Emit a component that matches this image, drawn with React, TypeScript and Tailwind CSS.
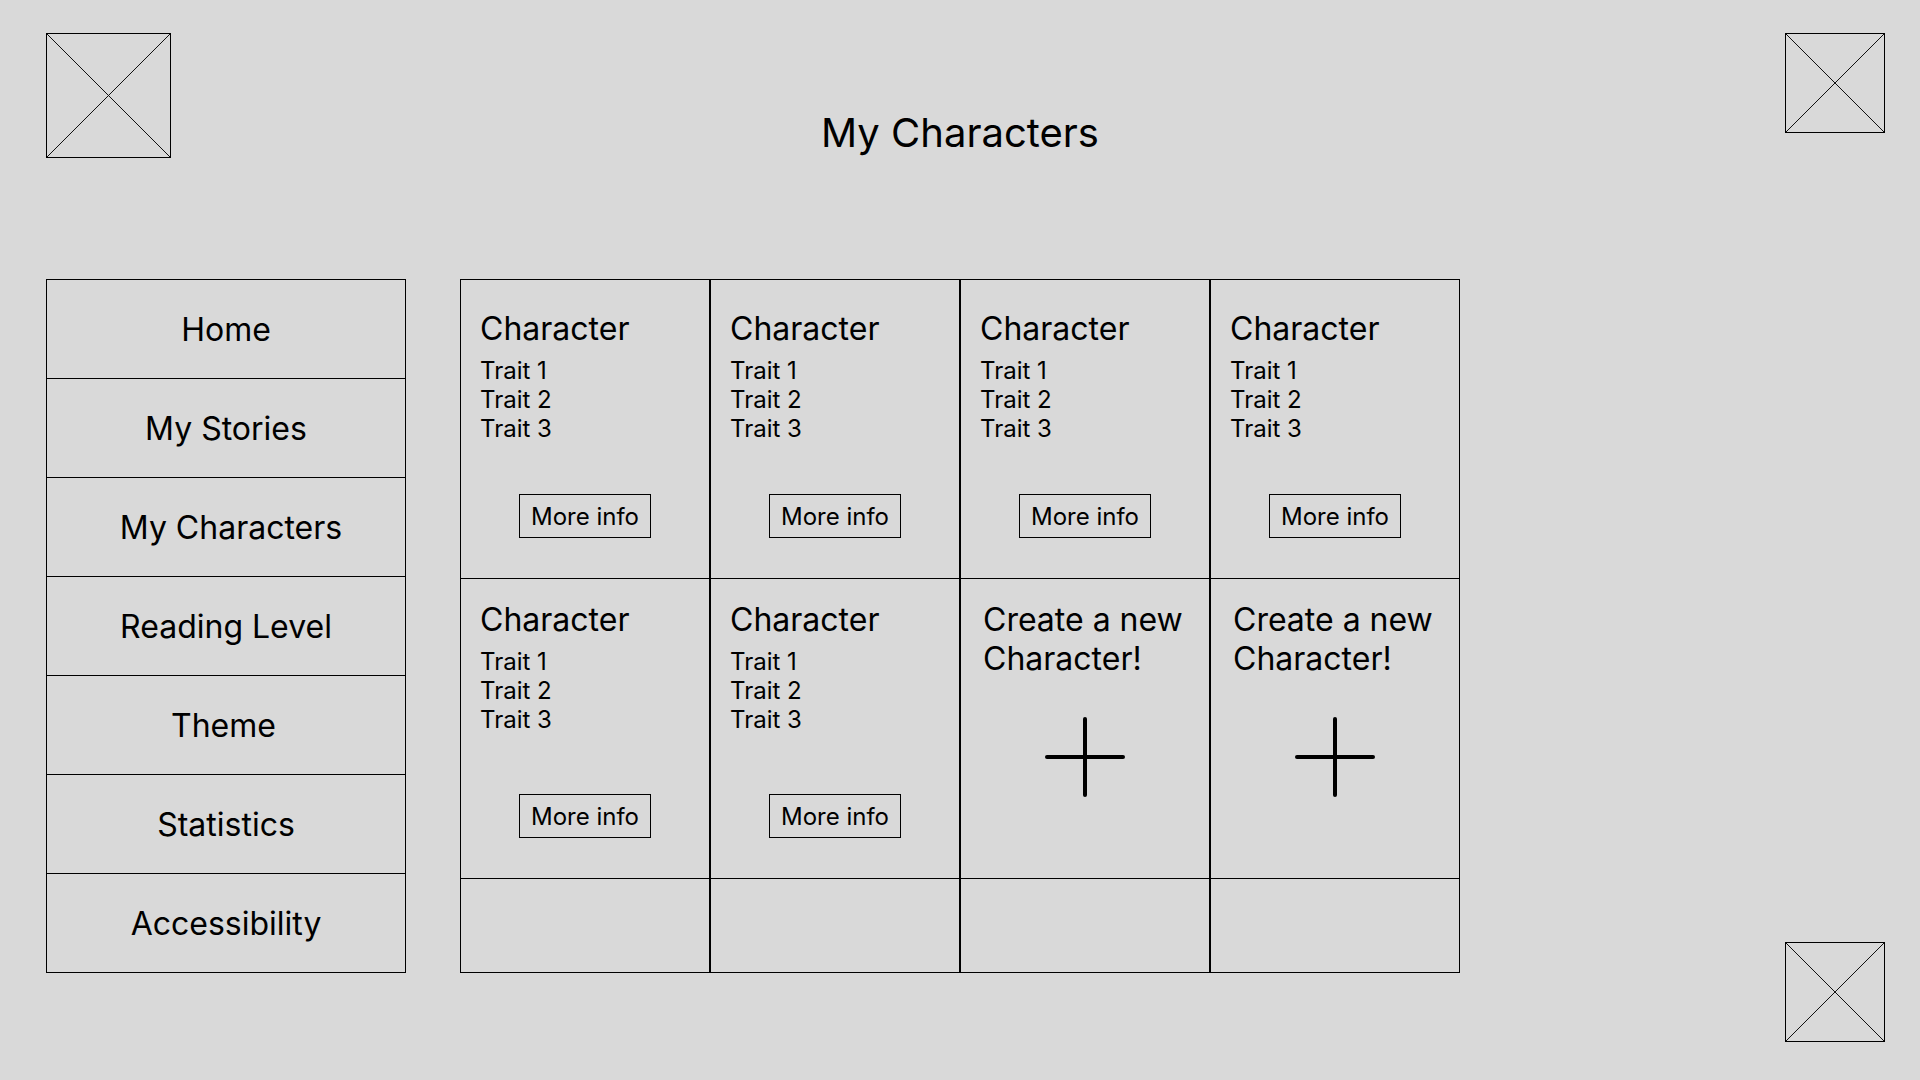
import React from 'react';

const Placeholder: React.FC<{ size: string }> = ({ size }) => (
  <div className={`relative border border-black ${size}`}>
    <svg className="absolute inset-0 h-full w-full" viewBox="0 0 100 100" preserveAspectRatio="none">
      <line x1="0" y1="0" x2="100" y2="100" stroke="#111" strokeWidth="1" vectorEffect="non-scaling-stroke" />
      <line x1="100" y1="0" x2="0" y2="100" stroke="#111" strokeWidth="1" vectorEffect="non-scaling-stroke" />
    </svg>
  </div>
);

const PlusIcon: React.FC = () => (
  <svg width="80" height="80" viewBox="0 0 80 80" className="self-center">
    <line x1="40" y1="2" x2="40" y2="78" stroke="black" strokeWidth="4" strokeLinecap="round" />
    <line x1="2" y1="40" x2="78" y2="40" stroke="black" strokeWidth="4" strokeLinecap="round" />
  </svg>
);

const CharacterCard: React.FC<{ top: string }> = ({ top }) => (
  <div className={`flex h-full flex-col pl-[19px] pb-[40px] ${top}`}>
    <div className="text-[32px] leading-[39px]">Character</div>
    <div className="mt-[8px] text-[24px] leading-[29px]">
      <div>Trait 1</div>
      <div>Trait 2</div>
      <div>Trait 3</div>
    </div>
    <button className="mt-auto -ml-[19px] h-[44px] w-[132px] self-center border border-black text-[24px] leading-[29px]">
      More info
    </button>
  </div>
);

const CreateCard: React.FC = () => (
  <div className="flex h-full flex-col pt-[21px] pl-[22px]">
    <div className="text-[32px] leading-[39px]">
      Create a new
      <br />
      Character!
    </div>
    <div className="mt-[39px] -ml-[22px] flex justify-center">
      <PlusIcon />
    </div>
  </div>
);

const navItems = [
  { label: 'Home', pad: '' },
  { label: 'My Stories', pad: '' },
  { label: 'My Characters', pad: 'pl-[10px]' },
  { label: 'Reading Level', pad: '' },
  { label: 'Theme', pad: 'pr-[5px]' },
  { label: 'Statistics', pad: '' },
  { label: 'Accessibility', pad: '' },
];

export default function App() {
  const columns = [
    { second: 'character' },
    { second: 'character' },
    { second: 'create' },
    { second: 'create' },
  ];

  return (
    <div className="h-[1080px] w-[1920px] overflow-hidden bg-[#d9d9d9] text-black font-['Inter','Noto_Sans',sans-serif]">
      <header className="grid h-[279px] grid-cols-[1fr_auto_1fr] items-start pt-[33px] px-[35px]">
        <div className="pl-[11px]">
          <Placeholder size="h-[125px] w-[125px]" />
        </div>
        <h1 className="mt-[76px] text-[40px] font-normal leading-[48px]">My Characters</h1>
        <div className="flex justify-end">
          <Placeholder size="h-[100px] w-[100px]" />
        </div>
      </header>

      <main className="flex items-start pl-[46px]">
        <nav className="flex w-[360px] flex-col border border-black">
          {navItems.map((item, i) => (
            <div
              key={item.label}
              className={`flex items-center justify-center text-[32px] leading-[39px] ${item.pad} ${
                i === 0 ? 'h-[98px]' : 'h-[99px] border-t border-black'
              }`}
            >
              {item.label}
            </div>
          ))}
        </nav>

        <section className="ml-[54px] flex">
          {columns.map((col, i) => (
            <div key={i} className="flex w-[250px] flex-col border border-black">
              <div className="h-[298px]">
                <CharacterCard top="pt-[29px]" />
              </div>
              <div className="h-[300px] border-t border-black">
                {col.second === 'character' ? <CharacterCard top="pt-[21px]" /> : <CreateCard />}
              </div>
              <div className="h-[94px] border-t border-black" />
            </div>
          ))}
        </section>

        <div className="flex flex-1 justify-end pt-[663px] pr-[35px]">
          <Placeholder size="h-[100px] w-[100px]" />
        </div>
      </main>
    </div>
  );
}
